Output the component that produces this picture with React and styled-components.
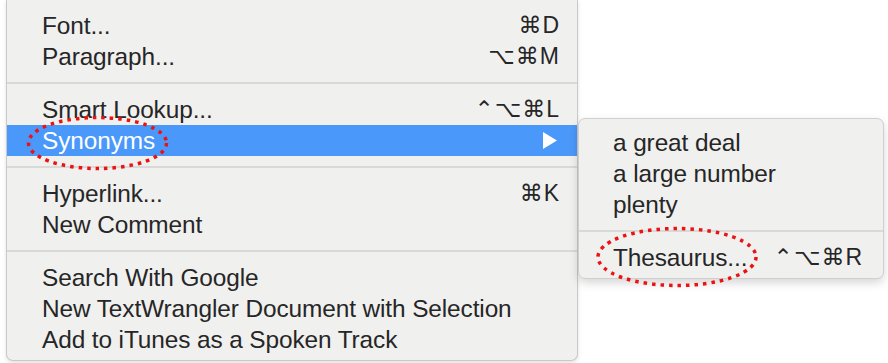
import styled, { createGlobalStyle } from 'styled-components';

const GlobalStyle = createGlobalStyle`
    html, body {
        margin: 0;
        padding: 0;
        background: #ffffff;
    }
    body {
        font-family: "Liberation Sans", "DejaVu Sans", Arial, sans-serif;
    }
`;

const Canvas = styled.div`
    position: relative;
    width: 888px;
    height: 363px;
    overflow: hidden;
    background: #ffffff;
`;

const Menu = styled.div`
    box-sizing: border-box;
    margin-left: 6px;
    width: 572px;
    height: 361px;
    padding: 10px 0 6px;
    background: #f0f0ef;
    border: 1px solid #c9c9c9;
    border-top: none;
    border-radius: 0 0 7px 7px;
    box-shadow: 0 2px 4px rgba(0, 0, 0, 0.12);
`;

const SubMenu = styled.div`
    position: absolute;
    left: 578px;
    top: 118px;
    box-sizing: border-box;
    width: 306px;
    height: 161px;
    padding: 8px 0 6px;
    background: #f0f0ef;
    border: 1px solid #cfcfcf;
    border-radius: 7px;
    box-shadow: 0 4px 10px rgba(0, 0, 0, 0.16);
`;

const Row = styled.div`
    display: flex;
    align-items: center;
    justify-content: space-between;
    height: 31px;
    padding: 0 ${(p) => p.$right || 17}px 0 ${(p) => p.$left || 35}px;
    font-size: 24.4px;
    color: ${(p) => (p.$active ? '#ffffff' : '#262626')};
    background: ${(p) => (p.$active ? '#4a98f9' : 'transparent')};
    white-space: nowrap;
`;

const Label = styled.span`
    letter-spacing: -0.1px;
`;

const Keys = styled.span`
    font-size: 23px;
    letter-spacing: 1px;
`;

const Separator = styled.div`
    height: 22px;
    display: flex;
    flex-direction: column;
    padding-top: 10px;
    box-sizing: border-box;

    &::before {
        content: '';
        display: block;
        height: 2px;
        background: #d9d9d8;
    }
`;

const Arrow = styled.svg`
    width: 14px;
    height: 17px;
    margin-right: 3px;
`;

const Marks = styled.svg`
    position: absolute;
    left: 0;
    top: 0;
    pointer-events: none;
`;

const SubmenuArrow = () => (
    <Arrow viewBox="0 0 14 17">
        <polygon points="0,0 14,8.5 0,17" fill="#ffffff" />
    </Arrow>
);

const mainGroups = [
    [
        { label: 'Font...', keys: '⌘D' },
        { label: 'Paragraph...', keys: '⌥⌘M' },
    ],
    [
        { label: 'Smart Lookup...', keys: '⌃⌥⌘L' },
        { label: 'Synonyms', submenu: true },
    ],
    [
        { label: 'Hyperlink...', keys: '⌘K' },
        { label: 'New Comment' },
    ],
    [
        { label: 'Search With Google' },
        { label: 'New TextWrangler Document with Selection' },
        { label: 'Add to iTunes as a Spoken Track' },
    ],
];

const App = () => {
    return (
        <>
            <GlobalStyle />
            <Canvas>
                <Menu>
                    {mainGroups.map((group, gi) => (
                        <div key={gi}>
                            {gi > 0 && <Separator />}
                            {group.map((item) => (
                                <Row key={item.label} $active={item.submenu}>
                                    <Label>{item.label}</Label>
                                    {item.keys && <Keys>{item.keys}</Keys>}
                                    {item.submenu && <SubmenuArrow />}
                                </Row>
                            ))}
                        </div>
                    ))}
                </Menu>

                <SubMenu>
                    <Row $left={34} $right={20}>
                        <Label>a great deal</Label>
                    </Row>
                    <Row $left={34} $right={20}>
                        <Label>a large number</Label>
                    </Row>
                    <Row $left={34} $right={20}>
                        <Label>plenty</Label>
                    </Row>
                    <Separator />
                    <Row $left={34} $right={20}>
                        <Label>Thesaurus...</Label>
                        <Keys>⌃⌥⌘R</Keys>
                    </Row>
                </SubMenu>

                <Marks width="888" height="363" viewBox="0 0 888 363">
                    <ellipse
                        cx="97.5"
                        cy="143"
                        rx="69"
                        ry="25.5"
                        fill="none"
                        stroke="#ee1111"
                        strokeWidth="3.5"
                        strokeDasharray="3.5 5"
                    />
                    <ellipse
                        cx="677"
                        cy="257"
                        rx="79"
                        ry="28.5"
                        fill="none"
                        stroke="#ee1111"
                        strokeWidth="3.5"
                        strokeDasharray="3.5 5"
                    />
                </Marks>
            </Canvas>
        </>
    );
};

export default App;
